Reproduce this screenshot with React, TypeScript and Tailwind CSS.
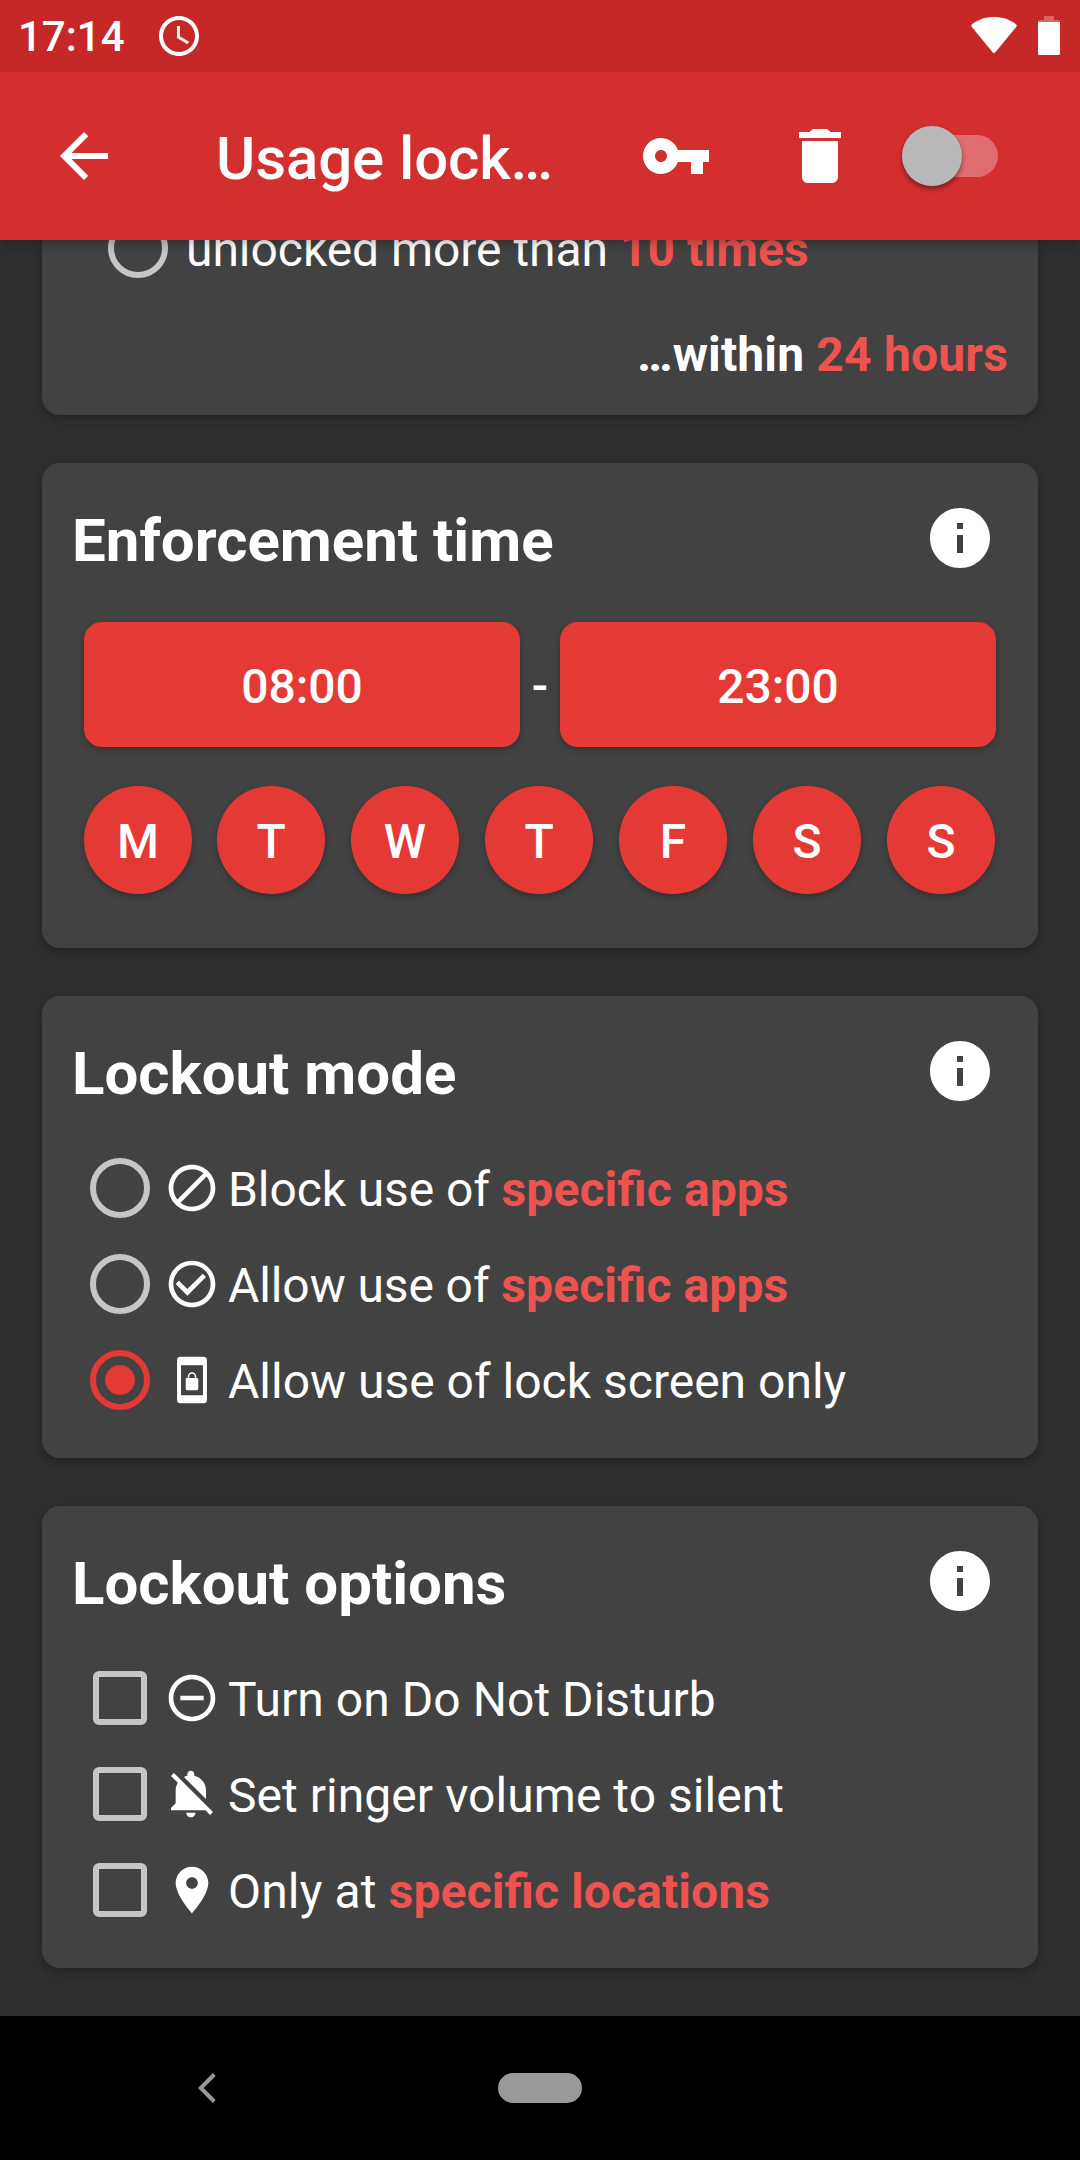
import { useState } from 'react';
import type { ReactNode } from 'react';
import clsx from 'clsx';

const PATHS = {
  back: 'M20 11H7.83l5.59-5.59L12 4l-8 8 8 8 1.41-1.41L7.83 13H20v-2z',
  key: 'M12.65 10C11.83 7.67 9.61 6 7 6c-3.31 0-6 2.69-6 6s2.69 6 6 6c2.61 0 4.83-1.67 5.65-4H17v4h4v-4h2v-4H12.65zM7 14c-1.1 0-2-.9-2-2s.9-2 2-2 2 .9 2 2-.9 2-2 2z',
  trash: 'M6 19c0 1.1.9 2 2 2h8c1.1 0 2-.9 2-2V7H6v12zM19 4h-3.5l-.7-.7q-.3-.3-.8-.3h-4q-.5 0-.8.3l-.7.7H5v2h14V4z',
  clock:
    'M11.99 2C6.47 2 2 6.48 2 12s4.47 10 9.99 10C17.52 22 22 17.52 22 12S17.52 2 11.99 2zM12 20c-4.42 0-8-3.58-8-8s3.58-8 8-8 8 3.58 8 8-3.58 8-8 8zm.5-13H11v6l5.25 3.15.75-1.23-4.5-2.67z',
  info: 'M12 2C6.48 2 2 6.48 2 12s4.48 10 10 10 10-4.48 10-10S17.52 2 12 2zm1 15h-2v-6h2v6zm0-8h-2V7h2v2z',
  block:
    'M12 2C6.5 2 2 6.5 2 12s4.5 10 10 10 10-4.5 10-10S17.5 2 12 2zM4 12c0-4.4 3.6-8 8-8 1.8 0 3.5.6 4.9 1.7L5.7 16.9C4.6 15.5 4 13.8 4 12zm8 8c-1.8 0-3.5-.6-4.9-1.7L18.3 7.1C19.4 8.5 20 10.2 20 12c0 4.4-3.6 8-8 8z',
  check:
    'M16.59 7.58L10 14.17l-3.59-3.58L5 12l5 5 8-8zM12 2C6.48 2 2 6.48 2 12s4.48 10 10 10 10-4.48 10-10S17.52 2 12 2zm0 18c-4.42 0-8-3.58-8-8s3.58-8 8-8 8 3.58 8 8-3.58 8-8 8z',
  screenLock:
    'M6.9 2h10.2c.7 0 1.3.6 1.3 1.3v17.4c0 .7-.6 1.3-1.3 1.3H6.9c-.7 0-1.3-.6-1.3-1.3V3.3C5.6 2.6 6.2 2 6.9 2zM7.3 5.7v12.8h9.4V5.7H7.3zM9.9 11.1h.3v-.5a1.8 1.9 0 0 1 3.6 0v.5h.3c.4 0 .6.3.6.6v4.1c0 .4-.3.6-.6.6H9.9c-.4 0-.6-.3-.6-.6v-4.1c0-.4.3-.6.6-.6zm.9 0h2.4v-.5a1.2 1.25 0 0 0-2.4 0v.5z',
  dnd: 'M7 11v2h10v-2H7zm5-9C6.48 2 2 6.48 2 12s4.48 10 10 10 10-4.48 10-10S17.52 2 12 2zm0 18c-4.41 0-8-3.59-8-8s3.59-8 8-8 8 3.59 8 8-3.59 8-8 8z',
  bellOff:
    'M11.5 22c1.1 0 2-.9 2-2h-4c0 1.1.9 2 2 2zM18 10.5c0-3.07-2.13-5.64-5-6.32V3.5c0-.83-.67-1.5-1.5-1.5S10 2.67 10 3.5v.68c-.51.12-.99.32-1.45.56L18 14.18V10.5zm-.27 8.5l2 2L21 19.73 4.27 3 3 4.27l2.92 2.92C5.34 8.16 5 9.29 5 10.5V16l-2 2v1h14.73z',
  place:
    'M12 2C8.13 2 5 5.13 5 9c0 5.25 7 13 7 13s7-7.75 7-13c0-3.87-3.13-7-7-7zm0 9.5c-1.38 0-2.5-1.12-2.5-2.5s1.12-2.5 2.5-2.5 2.5 1.12 2.5 2.5-1.12 2.5-2.5 2.5z',
};

type IconName = keyof typeof PATHS;

const Icon = ({ name, className }: { name: IconName; className: string }) => (
  <svg viewBox="0 0 24 24" fill="currentColor" fillRule="evenodd" className={clsx('shrink-0', className)}>
    <path d={PATHS[name]} />
  </svg>
);

const StatusBar = () => (
  <div className="flex h-[72px] items-center bg-[#c62828] pr-5 pl-[18px]">
    <span className="pt-[2px] text-[42px] leading-none font-medium">17:14</span>
    <Icon name="clock" className="ml-[30px] h-12 w-12" />
    <svg viewBox="0 0 46 36" fill="currentColor" className="mb-[2px] ml-auto h-9 w-[46px]">
      <path d="M23 0C14.5 0 7 2.6 1 7.2c-.9.7-1 1.7-.3 2.5l20.9 25.5c.8 1 2 1 2.8 0L45.3 9.7c.7-.8.6-1.8-.3-2.5C39 2.6 31.5 0 23 0z" />
    </svg>
    <svg viewBox="0 0 22 39" fill="currentColor" className="mb-px ml-[21px] h-[39px] w-[22px]">
      <path d="M6 0h10v4h5l1 2H0l1-2h5z" opacity="0.3" />
      <path d="M0 6h22v31.5c0 .8-.7 1.5-1.5 1.5h-19C.7 39 0 38.3 0 37.5z" />
    </svg>
  </div>
);

const Toolbar = ({ enabled, onToggle }: { enabled: boolean; onToggle: () => void }) => (
  <div className="flex h-[168px] items-center bg-[#d32f2f] pr-[82px] pl-12">
    <button>
      <Icon name="back" className="h-[72px] w-[72px]" />
    </button>
    <h1 className="ml-24 pt-[5px] text-[60px] leading-none font-medium tracking-[-0.1px]">Usage lock…</h1>
    <div className="ml-auto flex items-center">
      <Icon name="key" className="h-[72px] w-[72px]" />
      <Icon name="trash" className="ml-[72px] h-[72px] w-[72px]" />
      <button
        onClick={onToggle}
        className={clsx('ml-[46px] flex h-[61px] w-24 items-center', enabled && 'flex-row-reverse')}>
        <span className="z-10 h-[60px] w-[60px] shrink-0 rounded-full bg-[#b9b9b9] shadow-[0_3px_5px_rgba(0,0,0,0.4)]" />
        <span className="-mx-[50px] h-[42px] w-[86px] shrink-0 rounded-full bg-white/30" />
      </button>
    </div>
  </div>
);

const Card = ({ title, children }: { title: string; children: ReactNode }) => (
  <section className="rounded-[18px] bg-[#424242] px-[30px] pb-[42px] shadow-[0_4px_12px_rgba(0,0,0,0.3)]">
    <div className="flex h-[144px] items-center justify-between pt-[6px] pr-[12px]">
      <h2 className="pt-[6px] text-[60px] leading-none font-bold">{title}</h2>
      <Icon name="info" className="h-[72px] w-[72px]" />
    </div>
    {children}
  </section>
);

const Radio = ({ checked }: { checked?: boolean }) => (
  <span
    className={clsx(
      'flex h-[60px] w-[60px] shrink-0 items-center justify-center rounded-full border-[6px]',
      checked ? 'border-[#e53935]' : 'border-[#c6c6c6]',
    )}>
    {checked && <span className="h-[30px] w-[30px] rounded-full bg-[#e53935]" />}
  </span>
);

const Checkbox = ({ checked }: { checked: boolean }) => (
  <span
    className={clsx(
      'mx-[3px] h-[54px] w-[54px] shrink-0 rounded-[6px] border-[6px]',
      checked ? 'border-[#e53935] bg-[#e53935]' : 'border-[#c6c6c6]',
    )}
  />
);

// keeps the fi ligature, which letter-spacing would switch off
const Highlight = ({ children }: { children: ReactNode }) => (
  <span className="font-bold tracking-[0.1px] text-[#ef5350] [font-feature-settings:'liga'_1]">{children}</span>
);

type OptionRowProps = { control: ReactNode; icon: IconName; onClick: () => void; children: ReactNode };

const OptionRow = ({ control, icon, onClick, children }: OptionRowProps) => (
  <div onClick={onClick} className="flex h-24 items-center pl-[18px]">
    {control}
    <Icon name={icon} className="ml-[14px] h-[56px] w-[56px]" />
    <span className="ml-2 pt-[3px] text-[48px] leading-none whitespace-pre">{children}</span>
  </div>
);

const TimeButton = ({ time }: { time: string }) => (
  <button className="h-[125px] w-[436px] rounded-[18px] bg-[#e53935] pt-[4px] text-[48px] leading-none font-medium tracking-[-0.1px] shadow-[0_3px_6px_rgba(0,0,0,0.25)]">
    {time}
  </button>
);

const DAYS = ['M', 'T', 'W', 'T', 'F', 'S', 'S'];

export default function App() {
  const [enabled, setEnabled] = useState(false);
  const [mode, setMode] = useState(2);
  const [options, setOptions] = useState([false, false, false]);

  const toggleOption = (index: number) => setOptions(options.map((value, i) => (i === index ? !value : value)));

  return (
    <div className="flex h-[2160px] w-[1080px] flex-col overflow-hidden bg-[#303030] font-['Roboto',sans-serif] text-white">
      <header className="z-10 shadow-[0_3px_12px_rgba(0,0,0,0.3)]">
        <StatusBar />
        <Toolbar enabled={enabled} onToggle={() => setEnabled(!enabled)} />
      </header>

      <main className="flex grow flex-col gap-12 overflow-hidden px-[42px]">
        {/* scrolled partly under the toolbar */}
        <section className="h-[175px] shrink-0 rounded-b-[18px] bg-[#424242] px-[30px] shadow-[0_4px_12px_rgba(0,0,0,0.3)]">
          <div className="-mt-10 flex h-24 items-center pl-9">
            <Radio />
            <span className="ml-[18px] pt-[3px] text-[48px] leading-none tracking-[-0.05px]">
              unlocked more than <Highlight>10 times</Highlight>
            </span>
          </div>
          <p className="mt-[35px] text-right text-[48px] leading-none font-bold tracking-[0.15px]">
            …within <span className="tracking-[0.2px] text-[#ef5350]">24 hours</span>
          </p>
        </section>

        <Card title="Enforcement time">
          <div className="mt-[15px] flex items-center justify-between px-3">
            <TimeButton time="08:00" />
            <span className="pt-[3px] text-[48px] leading-none font-medium">-</span>
            <TimeButton time="23:00" />
          </div>
          <div className="mt-[39px] mb-3 flex gap-[26px] pl-3">
            {DAYS.map((day, index) => (
              <button
                key={index}
                className="h-[108px] w-[108px] rounded-full bg-[#e53935] pt-[4px] text-[48px] leading-none font-medium shadow-[0_3px_6px_rgba(0,0,0,0.25)] first:-mr-px">
                {day}
              </button>
            ))}
          </div>
        </Card>

        <Card title="Lockout mode">
          <div className="-mb-3">
            <OptionRow control={<Radio checked={mode === 0} />} icon="block" onClick={() => setMode(0)}>
              <span className="tracking-[-0.1px]">Block use of </span>
              <Highlight>specific apps</Highlight>
            </OptionRow>
            <OptionRow control={<Radio checked={mode === 1} />} icon="check" onClick={() => setMode(1)}>
              <span className="tracking-[-0.1px]">Allow use of </span>
              <Highlight>specific apps</Highlight>
            </OptionRow>
            <OptionRow control={<Radio checked={mode === 2} />} icon="screenLock" onClick={() => setMode(2)}>
              Allow use of lock screen only
            </OptionRow>
          </div>
        </Card>

        <Card title="Lockout options">
          <div className="-mb-3 tracking-[0.05px]">
            <OptionRow control={<Checkbox checked={options[0]} />} icon="dnd" onClick={() => toggleOption(0)}>
              Turn on Do Not Disturb
            </OptionRow>
            <OptionRow control={<Checkbox checked={options[1]} />} icon="bellOff" onClick={() => toggleOption(1)}>
              Set ringer volume to silent
            </OptionRow>
            <OptionRow control={<Checkbox checked={options[2]} />} icon="place" onClick={() => toggleOption(2)}>
              <span className="tracking-[0.15px]">Only at </span>
              <Highlight>specific locations</Highlight>
            </OptionRow>
          </div>
        </Card>
      </main>

      <nav className="flex h-36 shrink-0 items-center bg-black pl-[198px] text-[#999999]">
        <svg viewBox="0 0 18 30" fill="none" stroke="currentColor" strokeWidth="4" className="h-[30px] w-[18px]">
          <path d="M16.3 1.5L2.8 15l13.5 13.5" />
        </svg>
        <span className="ml-[282px] h-[30px] w-[84px] rounded-full bg-[#999999]" />
      </nav>
    </div>
  );
}
